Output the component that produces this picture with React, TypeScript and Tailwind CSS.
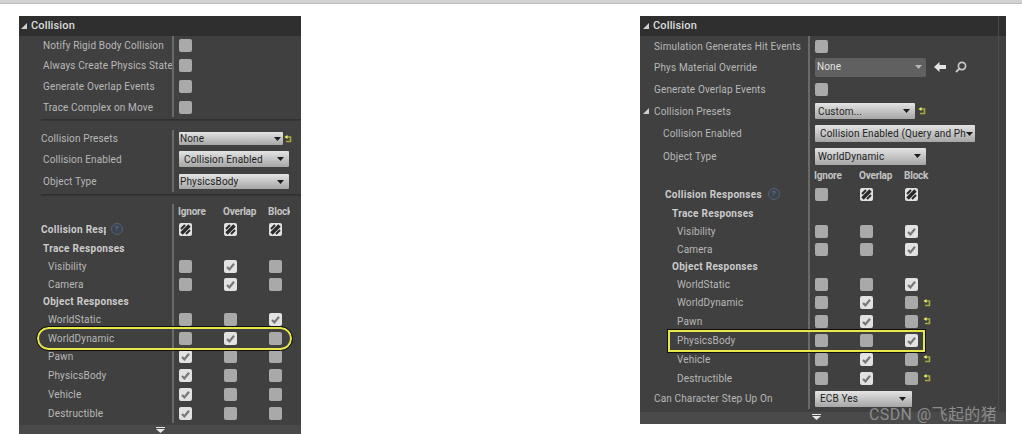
import React from "react";

const font = { fontFamily: "Roboto, 'Noto Sans CJK SC', sans-serif" };

function Cb({ state = "off" }: { state?: "off" | "on" | "mixed" }) {
  if (state === "off") return <span className="block w-[13px] h-[13px] rounded-[2px] bg-[#a9a9a9]" />;
  if (state === "on")
    return (
      <span className="block w-[13px] h-[13px] rounded-[2px] bg-[#e2e2e2]">
        <svg viewBox="0 0 13 13" className="w-[13px] h-[13px]">
          <path d="M3 7l2.400 2.400L10 3.800" fill="none" stroke="#777777" strokeWidth="2.200" />
        </svg>
      </span>
    );
  return (
    <span className="block w-[13px] h-[13px] rounded-[2px] bg-[#e2e2e2]">
      <svg viewBox="0 0 13 13" className="w-[13px] h-[13px]">
        <path d="M2 6L6 2M2 10L10 2M3 11L11 3M7 11L11 7" fill="none" stroke="#2a2a2a" strokeWidth="2" />
      </svg>
    </span>
  );
}

function Reset() {
  return (
    <svg viewBox="0 0 8 8" className="w-[8px] h-[8px] shrink-0">
      <path d="M3 2h3.500v4.500H2" fill="none" stroke="#a8a83a" strokeWidth="1.600" />
      <path d="M0.500 2L3.500 0v4z" fill="#f2f26a" />
    </svg>
  );
}

function Caret() {
  return (
    <svg viewBox="0 0 7 4" className="w-[7px] h-[4px] shrink-0">
      <path d="M0 0h7L3.500 4z" fill="#1c1c1c" />
    </svg>
  );
}

function Tri() {
  return (
    <svg viewBox="0 0 6 6" className="w-[6px] h-[6px] shrink-0">
      <path d="M6 0v6H0z" fill="#cfcfcf" />
    </svg>
  );
}

function Help() {
  return (
    <span className="flex w-[12px] h-[12px] shrink-0 items-center justify-center rounded-full border border-[#566172] bg-[#3c4450] text-[8px] font-bold text-[#5f6b7c]">
      ?
    </span>
  );
}

function Combo({ w, text, pad = "pl-[1px]", pr = "pr-[5px]" }: { w: string; text: string; pad?: string; pr?: string }) {
  return (
    <div className={`${w} h-full flex items-center ${pad} ${pr} rounded-[1px] bg-gradient-to-b from-[#e4e4e4] to-[#a6a6a6] text-[10px] text-[#1e1e1e] whitespace-nowrap`}>
      <span className="flex-1 min-w-0 overflow-hidden">{text}</span>
      <Caret />
    </div>
  );
}

function Row({
  h,
  label,
  lw,
  lp,
  bold,
  tri,
  children,
}: {
  h: string;
  label?: React.ReactNode;
  lw: string;
  lp: string;
  bold?: boolean;
  tri?: boolean;
  children?: React.ReactNode;
}) {
  return (
    <div className={`flex ${h}`}>
      <div className={`${lw} ${lp} shrink-0 flex items-center gap-[5px] overflow-hidden whitespace-nowrap ${bold ? "font-bold tracking-[0.3px] text-[#cccccc]" : "text-[#b8b8b8]"}`}>
        {tri && <Tri />}
        {label}
      </div>
      <div className="flex-1 flex items-center pl-[5px] border-l-2 border-[#6a6a6a]">{children}</div>
    </div>
  );
}

function Cbs({ a, b, c, reset }: { a?: "on" | "mixed"; b?: "on" | "mixed"; c?: "on" | "mixed"; reset?: boolean }) {
  return (
    <div className="flex items-center">
      <span className="w-[45px]"><Cb state={a ?? "off"} /></span>
      <span className="w-[45px]"><Cb state={b ?? "off"} /></span>
      <span className="w-[18px]"><Cb state={c ?? "off"} /></span>
      {reset && <Reset />}
    </div>
  );
}

function Heads({ clip }: { clip?: boolean }) {
  return (
    <div className="flex font-bold tracking-[-0.2px] text-[#c4c4c4] -ml-[1px] whitespace-nowrap">
      <span className="w-[45px]">Ignore</span>
      <span className="w-[45px]">Overlap</span>
      <span className={clip ? "w-[22px] overflow-hidden" : ""}>Block</span>
    </div>
  );
}

function Footer({ h, pr }: { h: string; pr: string }) {
  return (
    <div className={`${h} ${pr} bg-[#4a4a4a] flex flex-col items-center pt-[2px]`}>
      <span className="h-[1px] w-[9px] bg-[#e8e8e8] mb-[1px]" />
      <svg viewBox="0 0 9 4" className="w-[9px] h-[4px]"><path d="M0 0h9L4.500 4z" fill="#e8e8e8" /></svg>
    </div>
  );
}

function Sep({ h }: { h: string }) {
  return (
    <div className={`${h} pl-[22px] pt-[2px]`}>
      <div className="h-[2px] bg-gradient-to-b from-[#2e2e2e] to-[#383838]" />
    </div>
  );
}

function Left() {
  const lw = "w-[153px]";
  const l = "pl-[24px]";
  const s = "pl-[29px]";
  return (
    <div className="relative w-[282px] h-[418px] bg-[#404040] flex flex-col">
      <div className="h-[20px] bg-[#2f2f2f] flex items-center gap-[4px] pl-[2px] text-[11px] font-medium text-[#dcdcdc]">
        <Tri />Collision
      </div>
      <Row h="h-[19px]" lw={lw} lp={l} label="Notify Rigid Body Collision"><Cb /></Row>
      <Row h="h-[21px]" lw={lw} lp={l} label="Always Create Physics State"><Cb /></Row>
      <Row h="h-[21px]" lw={lw} lp={l} label="Generate Overlap Events"><Cb /></Row>
      <Row h="h-[20px]" lw={lw} lp={l} label="Trace Complex on Move"><Cb /></Row>
      <Sep h="h-[13px]" />
      <Row h="h-[17px]" lw={lw} lp="pl-[22px]" label="Collision Presets">
        <div className="h-[13px] flex items-center gap-[1px]"><Combo w="w-[104px]" text="None" pr="pr-[2px]" /><Reset /></div>
      </Row>
      <Row h="h-[24px]" lw={lw} lp={l} label="Collision Enabled">
        <div className="h-[16px]"><Combo w="w-[110px]" text="Collision Enabled" pad="pl-[5px]" /></div>
      </Row>
      <Row h="h-[21px]" lw={lw} lp={l} label="Object Type">
        <div className="h-[15px]"><Combo w="w-[110px]" text="PhysicsBody" /></div>
      </Row>
      <Sep h="h-[12px]" />
      <Row h="h-[14px]" lw={lw} lp={l}><Heads clip /></Row>
      <Row h="h-[22px]" lw={lw} lp="pl-[22px]" bold label={<><span className="w-[65px] overflow-hidden">Collision Responses</span><Help /></>}><Cbs a="mixed" b="mixed" c="mixed" /></Row>
      <Row h="h-[17px]" lw={lw} lp={l} bold label="Trace Responses" />
      <Row h="h-[18px]" lw={lw} lp={s} label="Visibility"><Cbs b="on" /></Row>
      <Row h="h-[19px]" lw={lw} lp={s} label="Camera"><Cbs b="on" /></Row>
      <Row h="h-[15px]" lw={lw} lp={l} bold label="Object Responses" />
      <Row h="h-[20px]" lw={lw} lp={s} label="WorldStatic"><Cbs c="on" /></Row>
      <Row h="h-[18px]" lw={lw} lp={s} label="WorldDynamic"><Cbs b="on" /></Row>
      <Row h="h-[19px]" lw={lw} lp={s} label="Pawn"><Cbs a="on" /></Row>
      <Row h="h-[19px]" lw={lw} lp={s} label="PhysicsBody"><Cbs a="on" /></Row>
      <Row h="h-[19px]" lw={lw} lp={s} label="Vehicle"><Cbs a="on" /></Row>
      <Row h="h-[19px]" lw={lw} lp={s} label="Destructible"><Cbs a="on" /></Row>
      <div className="h-[2px]" />
      <Footer h="flex-1" pr="pr-0" />
      <div className="absolute left-[18px] top-[311px] w-[255px] h-[23px] rounded-full border-2 border-[#e8e84a] outline outline-1 outline-[#111]" />
    </div>
  );
}

function Right() {
  const lw = "w-[168px]";
  const l = "pl-[14px]";
  const m = "pl-[23px]";
  const s = "pl-[37px]";
  return (
    <div className="relative w-[366px] h-[408px] bg-[#404040] flex flex-col">
      <div className="h-[20px] bg-[#2f2f2f] flex items-center gap-[4px] pl-[3px] text-[11px] font-medium text-[#dcdcdc]">
        <Tri />Collision
      </div>
      <Row h="h-[20px]" lw={lw} lp={l} label="Simulation Generates Hit Events"><Cb /></Row>
      <Row h="h-[22px]" lw={lw} lp={l} label="Phys Material Override">
        <div className="flex items-center">
          <div className="w-[111px] h-[19px] rounded-[2px] bg-[#606060] flex items-center justify-between pl-[2px] pr-[4px] text-[#e2e2e2]">
            <span className="-mt-[2px]">None</span>
            <svg viewBox="0 0 7 4" className="w-[7px] h-[4px]"><path d="M0 0h7L3.500 4z" fill="#b8b8b8" /></svg>
          </div>
          <svg viewBox="0 0 12 10" className="w-[12px] h-[10px] ml-[8px]"><path d="M0 5L5.500 0v3H12v4H5.500v3z" fill="#e4e4e4" /></svg>
          <svg viewBox="0 0 12 12" className="w-[12px] h-[12px] ml-[9px]"><circle cx="7" cy="5" r="3.600" fill="none" stroke="#c8c8c8" strokeWidth="1.700" /><path d="M4.500 7.500L1 11" stroke="#c8c8c8" strokeWidth="1.800" /></svg>
        </div>
      </Row>
      <Row h="h-[22px]" lw={lw} lp={l} label="Generate Overlap Events"><Cb /></Row>
      <Row h="h-[22px]" lw={lw} lp="pl-[3px]" tri label="Collision Presets">
        <div className="flex items-center gap-[3px] h-[16px]"><Combo w="w-[100px]" text="Custom..." pad="pl-[3px]" /><Reset /></div>
      </Row>
      <Row h="h-[23px]" lw={lw} lp={m} label="Collision Enabled">
        <div className="h-[17px]"><Combo w="w-[160px]" text="Collision Enabled (Query and Physics)" pad="pl-[5px]" pr="pr-[2px]" /></div>
      </Row>
      <Row h="h-[22px]" lw={lw} lp={m} label="Object Type">
        <div className="h-[17px]"><Combo w="w-[111px]" text="WorldDynamic" pad="pl-[3px]" /></div>
      </Row>
      <Row h="h-[17px]" lw={lw} lp={m}><Heads /></Row>
      <Row h="h-[20px]" lw={lw} lp="pl-[25px]" bold label={<><span>Collision Responses</span><span className="ml-[1px]"><Help /></span></>}><Cbs b="mixed" c="mixed" /></Row>
      <Row h="h-[18px]" lw={lw} lp="pl-[32px]" bold label="Trace Responses" />
      <Row h="h-[18px]" lw={lw} lp={s} label="Visibility"><Cbs c="on" /></Row>
      <Row h="h-[18px]" lw={lw} lp={s} label="Camera"><Cbs c="on" /></Row>
      <Row h="h-[17px]" lw={lw} lp="pl-[32px]" bold label="Object Responses" />
      <Row h="h-[18px]" lw={lw} lp={s} label="WorldStatic"><Cbs c="on" /></Row>
      <Row h="h-[19px]" lw={lw} lp={s} label="WorldDynamic"><Cbs b="on" reset /></Row>
      <Row h="h-[18px]" lw={lw} lp={s} label="Pawn"><Cbs b="on" reset /></Row>
      <Row h="h-[20px]" lw={lw} lp={s} label="PhysicsBody"><Cbs c="on" /></Row>
      <Row h="h-[18px]" lw={lw} lp={s} label="Vehicle"><Cbs b="on" reset /></Row>
      <Row h="h-[20px]" lw={lw} lp={s} label="Destructible"><Cbs b="on" reset /></Row>
      <Row h="h-[21px]" lw={lw} lp={l} label="Can Character Step Up On">
        <div className="h-[16px]"><Combo w="w-[97px]" text="ECB Yes" pad="pl-[5px]" pr="pr-[6px]" /></div>
      </Row>
      <div className="h-[3px]" />
      <Footer h="flex-1" pr="pr-[14px]" />
      <div className="absolute right-[7px] top-0 bottom-[12px] w-px bg-[#4a4a4a]" />
      <div className="absolute left-[28px] top-[314px] w-[257px] h-[22px] border-2 border-[#e8e84a] outline outline-1 outline-[#111]" />
    </div>
  );
}

export default function App() {
  return (
    <div className="relative w-[1022px] h-[434px] overflow-hidden bg-white text-[10px] tracking-[0.14px]" style={font}>
      <div className="h-[4px] bg-[#d2d2d2] border-b border-[#bdbdbd]" />
      <div className="flex justify-between pl-[19px] pr-[16px] pt-[12px]">
        <Left />
        <Right />
      </div>
      <div className="absolute left-[869px] top-[405px] text-[16px] leading-[20px] tracking-[0.4px] text-[#8c8c8c] whitespace-nowrap">CSDN @飞起的猪</div>
    </div>
  );
}
